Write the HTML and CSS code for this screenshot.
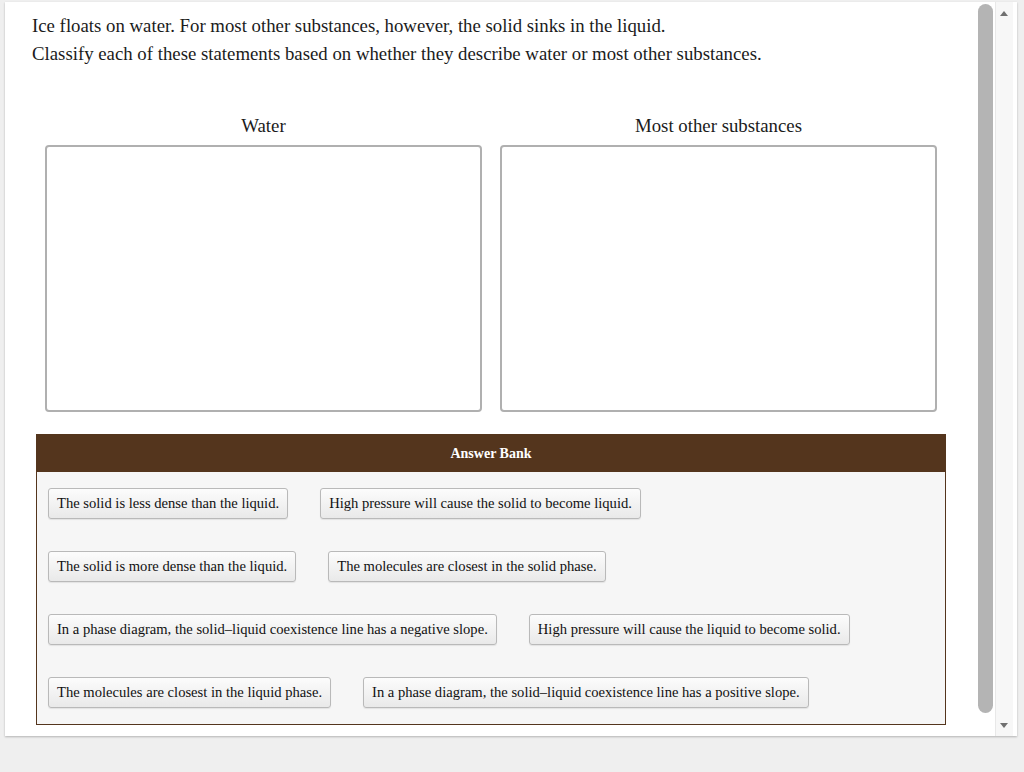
FILE: index.html
```html
<!DOCTYPE html>
<html lang="en">
<head>
  <meta charset="UTF-8">
  <title>Classify statements</title>
  <link rel="stylesheet" href="styles.css">
</head>
<body>
  <div class="panel">
    <div class="prompt">
      <p>Ice floats on water. For most other substances, however, the solid sinks in the liquid.</p>
      <p>Classify each of these statements based on whether they describe water or most other substances.</p>
    </div>

    <div class="bins">
      <div class="bin">
        <h2 class="bin-title">Water</h2>
        <div class="bin-drop"></div>
      </div>
      <div class="bin">
        <h2 class="bin-title">Most other substances</h2>
        <div class="bin-drop"></div>
      </div>
    </div>

    <div class="bank">
      <div class="bank-head">Answer Bank</div>
      <div class="bank-body">
        <div class="bank-row">
          <button class="chip">The solid is less dense than the liquid.</button>
          <button class="chip">High pressure will cause the solid to become liquid.</button>
        </div>
        <div class="bank-row">
          <button class="chip">The solid is more dense than the liquid.</button>
          <button class="chip">The molecules are closest in the solid phase.</button>
        </div>
        <div class="bank-row">
          <button class="chip">In a phase diagram, the solid–liquid coexistence line has a negative slope.</button>
          <button class="chip">High pressure will cause the liquid to become solid.</button>
        </div>
        <div class="bank-row">
          <button class="chip">The molecules are closest in the liquid phase.</button>
          <button class="chip">In a phase diagram, the solid–liquid coexistence line has a positive slope.</button>
        </div>
      </div>
    </div>

    <!-- scrollbar overlay -->
    <div class="thumb"></div>
    <div class="track">
      <span class="arrow up"></span>
      <span class="arrow down"></span>
    </div>
  </div>
</body>
</html>
```
FILE: styles.css
```css
* { margin: 0; padding: 0; box-sizing: border-box; }
body {
  background: #efefef;
  font-family: "Liberation Serif", "Times New Roman", serif;
  color: #1b1b1b;
  width: 1024px; height: 772px; overflow: hidden;
}
.panel {
  position: relative;
  margin: 2px 0 0 5px;
  width: 1012px; height: 734px;
  background: #fff;
  box-shadow: 0 1px 2px rgba(0,0,0,0.25);
  padding: 10px 0 0 27px;
}
.prompt p { font-size: 18.8px; line-height: 28px; }

.bins { display: flex; gap: 18px; margin: 47px 0 0 13px; }
.bin { width: 437px; }
.bin-title {
  font-size: 18.8px; font-weight: normal; text-align: center;
  line-height: 22px; margin-bottom: 8px;
}
.bin-drop { height: 267px; border: 2px solid #b0b0b0; border-radius: 4px; }

.bank { margin: 22px 0 0 4px; width: 910px; border: 1px solid #54351d; }
.bank-head {
  background: #54351d; color: #fff; text-align: center;
  font-size: 14px; font-weight: bold; line-height: 37px;
}
.bank-body { background: #f6f6f6; padding: 16px 11px 16px; display: flex; flex-direction: column; gap: 32px; }
.bank-row { display: flex; gap: 32px; }
.chip {
  font-family: inherit; font-size: 14.6px; color: #111;
  height: 31px; padding: 0 8px;
  background: linear-gradient(#fcfcfc, #e9e9e9);
  border: 1px solid #b9b9b9; border-radius: 3px;
  box-shadow: 0 1px 1px rgba(0,0,0,0.08);
}

.thumb {
  position: absolute; left: 973px; top: 2px;
  width: 15px; height: 709px;
  background: #b4b4b4; border-radius: 8px;
}
.track {
  position: absolute; right: 4px; top: 0; bottom: 0; width: 18px;
  background: #f7f7f7; border-left: 1px solid #e8e8e8;
}
.arrow { position: absolute; left: 4px; width: 0; height: 0; border-left: 4px solid transparent; border-right: 4px solid transparent; }
.arrow.up { top: 9px; border-bottom: 5px solid #707070; }
.arrow.down { bottom: 8px; border-top: 5px solid #707070; }
```
